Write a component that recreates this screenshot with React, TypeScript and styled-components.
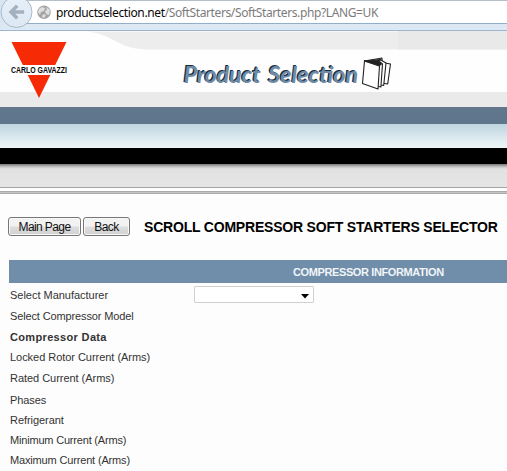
import React from "react";
import styled, { createGlobalStyle } from "styled-components";

const GlobalStyle = createGlobalStyle`
  * { box-sizing: border-box; }
  body { margin: 0; background: #fdfdfd; overflow: hidden; font-family: "Liberation Sans", Arial, sans-serif; }
`;

const Page = styled.div`
  width: 507px;
  height: 471px;
  overflow: hidden;
  background: #fdfdfd;
`;

const BrowserBar = styled.div`
  position: relative;
  height: 31px;
  background: linear-gradient(#dae6f2, #dce9f5);
  border-bottom: 1px solid #9db5cd;
`;

const AddressField = styled.div`
  display: flex;
  align-items: center;
  height: 24px;
  margin-left: 25px;
  padding: 2px 0 0 31px;
  background: #fff;
  border-top: 1px solid #b5bfc9;
  border-bottom: 1px solid #91afc8;
  font-family: "Noto Sans", "Open Sans", sans-serif;
  font-size: 12px;
  line-height: 20px;
  letter-spacing: -0.38px;
  white-space: pre;
`;

const UrlPart = styled.span<{ $host?: boolean }>`
  color: ${(p) => (p.$host ? "#080808" : "#7b7b7b")};
`;

const BrowserIcons = styled.svg`
  position: absolute;
  left: 0;
  top: 0;
`;

const Banner = styled.svg`
  display: block;
`;

const Band = styled.div<{ $height: number; $fill: string }>`
  height: ${(p) => p.$height}px;
  background: ${(p) => p.$fill};
`;

const TitleRow = styled.div`
  display: flex;
  align-items: center;
  height: 19px;
  margin: 23px 0 24px 8px;
`;

const Button = styled.button<{ $width: number }>`
  flex: none;
  width: ${(p) => p.$width}px;
  height: 19px;
  margin-right: 2px;
  padding: 2px 0 0;
  border: 1px solid #777;
  border-radius: 3px;
  box-shadow: inset 0 0 0 1px #f8f8f8;
  background: linear-gradient(#f2f2f2 0 48%, #dedede 52%, #d0d0d0);
  color: #111;
  font: 12px/15px "Liberation Sans", Arial, sans-serif;
  letter-spacing: -0.6px;
  white-space: nowrap;
`;

const Title = styled.h1`
  margin: 1px 0 0 12px;
  color: #000;
  font-size: 14px;
  line-height: 18px;
  letter-spacing: -0.2px;
  white-space: nowrap;
`;

const SectionHeader = styled.div`
  height: 23px;
  margin-left: 9px;
  padding-left: 284px;
  background: #708da9;
  color: #f1f5f8;
  font-size: 11px;
  font-weight: bold;
  line-height: 24px;
  letter-spacing: -0.39px;
  white-space: nowrap;
`;

const Form = styled.div`
  display: grid;
  grid-template-columns: 184px 120px;
  grid-template-rows: 23px 21px 21px 20px 21px 22px 20px 20px 20px;
  align-items: end;
  margin-left: 10px;
`;

const Label = styled.div<{ $strong?: boolean; $spacing: number }>`
  grid-column: 1;
  height: 20px;
  color: #333;
  font-size: 11px;
  font-weight: ${(p) => (p.$strong ? "bold" : "normal")};
  line-height: 18px;
  letter-spacing: ${(p) => p.$spacing}px;
  white-space: nowrap;
`;

const Picker = styled.div`
  grid-column: 2;
  grid-row: 1;
  align-self: start;
  display: flex;
  align-items: center;
  justify-content: flex-end;
  height: 17px;
  margin-top: 3px;
  padding: 4px 4px 0 0;
  border: 1px solid #d0d0d0;
  border-radius: 1px;
  background: #fff;
`;

const fields = [
  { text: "Select Manufacturer", spacing: -0.02 },
  { text: "Select Compressor Model", spacing: -0.13 },
  { text: "Compressor Data", strong: true, spacing: 0.34 },
  { text: "Locked Rotor Current (Arms)", spacing: -0.04 },
  { text: "Rated Current (Arms)", spacing: -0.04 },
  { text: "Phases", spacing: -0.1 },
  { text: "Refrigerant", spacing: -0.05 },
  { text: "Minimum Current (Arms)", spacing: -0.19 },
  { text: "Maximum Current (Arms)", spacing: -0.16 },
];

function Navigation() {
  return (
    <BrowserBar>
      <AddressField>
        <UrlPart $host>productselection.net</UrlPart>
        <UrlPart>/SoftStarters/SoftStarters.php?LANG=UK</UrlPart>
      </AddressField>
      <BrowserIcons width="54" height="30" viewBox="0 0 54 30">
        <defs>
          <linearGradient id="back" x2="0" y2="1">
            <stop stopColor="#e8f0f8" />
            <stop offset="1" stopColor="#dce8f4" />
          </linearGradient>
        </defs>
        <circle cx="16.5" cy="12" r="15.5" fill="url(#back)" stroke="#a9b9ca" />
        <path d="M8.5 12 16 4.5l2.5 2.5-3.4 3.2h9v3.6h-9l3.4 3.2-2.5 2.5Z" fill="#a3b0be" />
        <circle cx="44" cy="12.3" r="6.7" fill="#a4a4a4" />
        <path d="m39 9 3-2 3 1-1 3-3 1-1 3-2-3ZM46 7l4 3-1 5-3-1-1-3 2-1ZM43 14l3 1-2 3-2-1Z" fill="#e0e0e0" />
      </BrowserIcons>
    </BrowserBar>
  );
}

function BrandBanner() {
  return (
    <Banner width="507" height="77" viewBox="0 31 507 77">
      <rect y="31" width="507" height="77" fill="#fefefe" />
      <path d="M86 31.5C112 33 118 49.5 148 49.5H507V31.5Z" fill="#ededed" />
      <rect x="398" y="31" width="109" height="18.5" fill="#e9e9e9" />
      <rect y="92" width="507" height="15" fill="#eaeaea" />
      <rect y="107" width="507" height="1" fill="#66778a" />
      <path d="M11.5 42H66.5L39 98Z" fill="#f62a05" />
      <rect x="10" y="65" width="58" height="10" fill="#fefefe" />
      <text x="11" y="73" textLength="56" lengthAdjust="spacingAndGlyphs" fontFamily="Liberation Sans, sans-serif" fontSize="9.5" fontWeight="bold" fill="#080808">CARLO GAVAZZI</text>
      <g fontFamily="Lato, sans-serif" fontSize="23" fontWeight="bold" fontStyle="italic">
        <text x="182.5" y="82.2" textLength="77" lengthAdjust="spacingAndGlyphs" fill="#172b3d">Product</text>
        <text x="267" y="82.2" textLength="90" lengthAdjust="spacingAndGlyphs" fill="#172b3d">Selection</text>
        <text x="183.7" y="83.4" textLength="77" lengthAdjust="spacingAndGlyphs" fill="#6f8ba5">Product</text>
        <text x="268.2" y="83.4" textLength="90" lengthAdjust="spacingAndGlyphs" fill="#6f8ba5">Selection</text>
      </g>
      <g fill="#fff" stroke="#222" strokeWidth="1.1" strokeLinejoin="round">
        <path d="m364.5 61 17.5-3v4.5l8.5 1.5-2.8 20-6-1Z" />
        <path d="m364.5 61 15.5-1.5 6 3.5-2.3 22.5-7-1Z" />
        <path d="m364.5 61 14-.3 4 3.2-1.6 23.1-4-1Z" />
        <path d="m364.5 61 15 5-1.5 23-15.5-5.5Z" />
        <path d="m364.5 61 15 5 2.5-2-3.5-3 3-1Z" fill="#222" strokeWidth=".4" />
      </g>
    </Banner>
  );
}

export default function App() {
  return (
    <Page>
      <GlobalStyle />
      <Navigation />
      <BrandBanner />
      <Band $height={16} $fill="#60768c" />
      <Band $height={24} $fill="linear-gradient(#bed5df, #e4f0f3 75%, #edf4f4)" />
      <Band $height={16} $fill="#000" />
      <Band $height={23} $fill="linear-gradient(#777 0, #c8c8c8 3px, #e1e1e1 5px, #e5e5e5)" />
      <Band $height={1} $fill="#a5a5a5" />
      <Band $height={3} $fill="#fefefe" />
      <Band $height={3} $fill="linear-gradient(#aaa 0 1px, #c5c5c5 1px 2px, #aaa 2px)" />
      <TitleRow>
        <Button $width={73}>Main Page</Button>
        <Button $width={47}>Back</Button>
        <Title>SCROLL COMPRESSOR SOFT STARTERS SELECTOR</Title>
      </TitleRow>
      <SectionHeader>COMPRESSOR INFORMATION</SectionHeader>
      <Form>
        {fields.map((field) => (
          <Label key={field.text} $strong={field.strong} $spacing={field.spacing}>{field.text}</Label>
        ))}
        <Picker>
          <svg width="8" height="5" viewBox="0 0 8 5"><path d="M0 0h8L4 4.5Z" fill="#000" /></svg>
        </Picker>
      </Form>
    </Page>
  );
}
